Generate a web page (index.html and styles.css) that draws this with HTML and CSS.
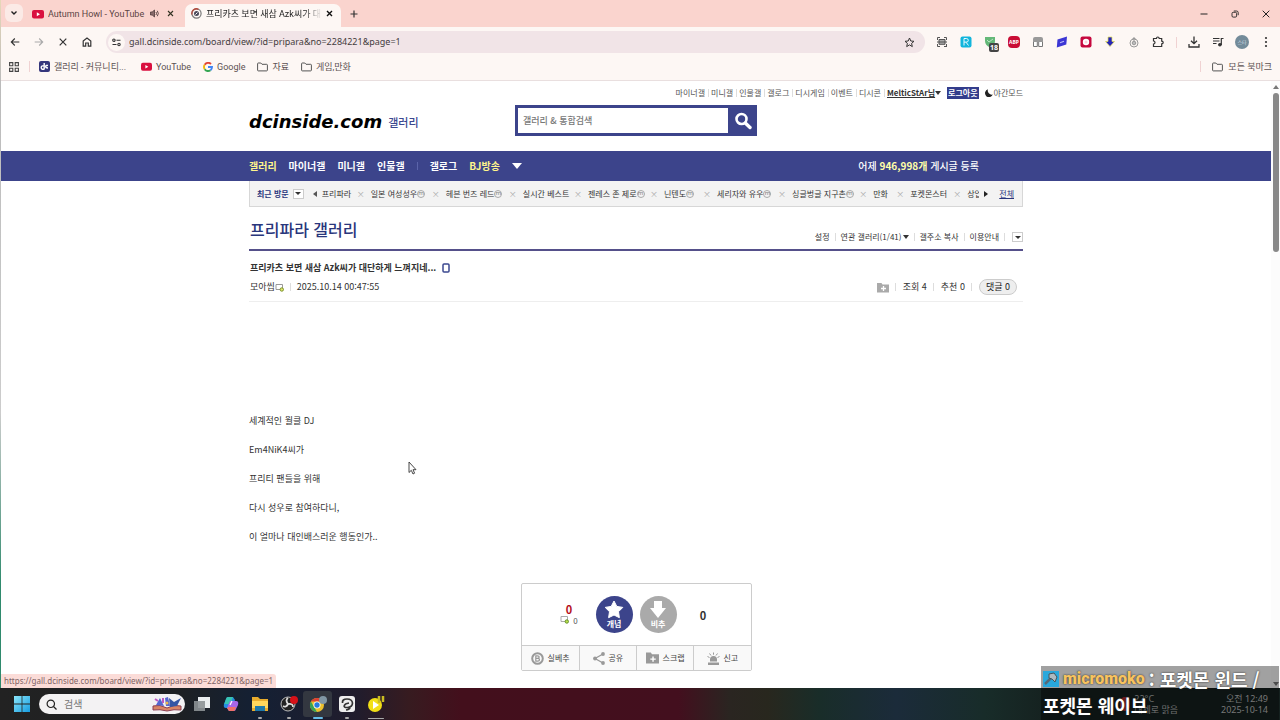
FILE: index.html
```html
<!DOCTYPE html>
<html lang="ko">
<head>
<meta charset="utf-8">
<title>프리파라 갤러리</title>
<link rel="stylesheet" href="styles.css">
</head>
<body>
<div class="browser">
  <header class="chrome">
    <div class="tabstrip">
      <button class="tab-search" aria-label="탭 검색"><svg width="8" height="8" viewBox="0 0 8 8"><path d="M1.500 2.500 4 5l2.500-2.500" fill="none" stroke="#222" stroke-width="1.400"/></svg></button>
      <div class="tab">
        <svg width="12" height="12" viewBox="0 0 12 12"><rect y="2" width="12" height="8.500" rx="2" fill="#d9103f"/><path d="M4.800 4.300v4L8 6.300z" fill="#fff"/></svg>
        <span class="tab-title">Autumn Howl - YouTube</span>
        <svg class="sound" width="9" height="9" viewBox="0 0 9 9"><path d="M.5 3h1.700L4.500 1v7L2.200 6H.5z" fill="#8a6c6c" stroke="#4d3a3a" stroke-width=".8"/><path d="M6 3q1 1.500 0 3M7.300 1.800q2 2.700 0 5.400" fill="none" stroke="#4d3a3a" stroke-width=".9"/></svg>
        <button class="icon-btn" aria-label="닫기"><svg width="7" height="7" viewBox="0 0 7 7"><path d="M1 1l5 5M6 1 1 6" stroke="#332" stroke-width="1.100"/></svg></button>
      </div>
      <div class="tab active">
        <svg width="11" height="11" viewBox="0 0 11 11"><circle cx="5.500" cy="5.500" r="4.600" fill="none" stroke="#777" stroke-width="1.200"/><path d="M1 6.500A4.600 4.600 0 0 1 7.500 1.300" fill="none" stroke="#b5493c" stroke-width="1.300"/><circle cx="5.500" cy="5.500" r="2.500" fill="#4a4a5a"/><path d="M4.500 6.500l2-2" stroke="#fff"/></svg>
        <span class="tab-title fade">프리카츠 보면 새삼 Azk씨가 대단하게</span>
        <button class="icon-btn" aria-label="닫기"><svg width="7" height="7" viewBox="0 0 7 7"><path d="M1 1l5 5M6 1 1 6" stroke="#111" stroke-width="1.400"/></svg></button>
      </div>
      <button class="icon-btn new-tab" aria-label="새 탭"><svg width="8" height="8" viewBox="0 0 8 8"><path d="M4 .5v7M.5 4h7" stroke="#333" stroke-width="1.200"/></svg></button>
      <div class="window-controls">
        <button class="icon-btn" aria-label="최소화"><svg width="8" height="8" viewBox="0 0 8 8"><path d="M.5 4h7" stroke="#222"/></svg></button>
        <button class="icon-btn" aria-label="이전 크기로"><svg width="8" height="8" viewBox="0 0 8 8" fill="none" stroke="#222" stroke-width=".9"><rect x="1" y="2.300" width="4.600" height="4.800" rx="1.200"/><path d="M2.800 1h2.700Q7.200 1 7.200 2.700v2.500"/></svg></button>
        <button class="icon-btn" aria-label="창 닫기"><svg width="8" height="8" viewBox="0 0 8 8"><path d="M.7.7l6.600 6.600M7.300.7.7 7.300" stroke="#222"/></svg></button>
      </div>
    </div>

    <div class="toolbar">
      <button class="tool" aria-label="뒤로"><svg width="10" height="10" viewBox="0 0 10 10" fill="none" stroke="#333" stroke-width="1.100"><path d="M9.300 5H1.500M4.800 1.500 1.300 5l3.500 3.500"/></svg></button>
      <button class="tool" aria-label="앞으로"><svg width="10" height="10" viewBox="0 0 10 10" fill="none" stroke="#aaa" stroke-width="1.100"><path d="M.7 5h7.800M5.200 1.500 8.700 5 5.200 8.500"/></svg></button>
      <button class="tool" aria-label="중지"><svg width="10" height="10" viewBox="0 0 10 10"><path d="M1.700 1.700l6.600 6.600M8.300 1.700 1.700 8.300" stroke="#333" stroke-width="1.200"/></svg></button>
      <button class="tool" aria-label="홈"><svg width="10" height="10" viewBox="0 0 10 10" fill="none" stroke="#333" stroke-width="1.200"><path d="M1.200 4 5 1l3.800 3v5.200H6.300V6H3.700v3.200H1.200z"/></svg></button>
      <div class="omnibox">
        <button class="site-info" aria-label="사이트 정보"><svg width="9" height="9" viewBox="0 0 9 9" fill="none" stroke="#333" stroke-width="1.100"><circle cx="1.900" cy="2.200" r="1.200"/><path d="M4.500 2.200H8.500M.5 6.500h4"/><circle cx="7" cy="6.500" r="1.200"/></svg></button>
        <input class="url" aria-label="주소" value="gall.dcinside.com/board/view/?id=pripara&amp;no=2284221&amp;page=1">
        <button class="icon-btn" aria-label="북마크"><svg width="11" height="11" viewBox="0 0 11 11"><path d="M5.500 1l1.300 3 3.200.3-2.400 2.100.7 3.200-2.800-1.700-2.800 1.700.7-3.200L1 4.300 4.200 4z" fill="none" stroke="#333"/></svg></button>
      </div>
      <div class="extensions">
        <button class="tool" aria-label="캡처"><svg width="12" height="12" viewBox="0 0 12 12" fill="none" stroke="#555"><path d="M1.500 4V1.500H4M8 1.500h2.500V4M1.500 8v2.500H4M8 10.500h3M10.500 8v3"/><path d="M3 3.500h6v4.800H3z" fill="#aaa"/><path d="M1 6h10"/></svg></button>
        <button class="tool" aria-label="R"><svg width="12" height="12" viewBox="0 0 12 12"><rect x=".5" y=".5" width="11" height="11" rx="2" fill="#12b5dc"/><path d="M4 9.500v-7h2.300q2 0 2 1.800t-2 1.800H4M6 6.200l2.500 3.300" fill="none" stroke="#e9faff"/></svg></button>
        <button class="tool badge-tool" aria-label="차단기"><svg width="12" height="12" viewBox="0 0 12 12"><path d="M1 1h10v4q0 4-5 6.500Q1 9 1 5z" fill="#64b878"/><path d="M3 4l2 2 4-3" fill="none" stroke="#b9e3c3"/></svg><span class="badge">18</span></button>
        <button class="tool" aria-label="ABP"><span class="abp">ABP</span></button>
        <button class="tool" aria-label="Tampermonkey"><svg width="12" height="12" viewBox="0 0 12 12"><path d="M1 3q0-2 2-2h6q2 0 2 2v3H1z" fill="#999"/><path d="M1.500 6v4.500h3.800V6M6.700 6v4.500h3.800V6" fill="#fff" stroke="#777"/></svg></button>
        <button class="tool" aria-label="확장 프로그램"><svg width="12" height="12" viewBox="0 0 12 12"><path d="M1.500 3.500 11 .5l-.7 8L.8 11.500z" fill="#3c36d4"/><path d="M4 6.800l4-1.500" stroke="#bbbafa" stroke-width="1.200"/></svg></button>
        <button class="tool" aria-label="녹화"><svg width="12" height="12" viewBox="0 0 12 12"><rect x=".5" y=".5" width="11" height="11" rx="2" fill="#c6083e"/><circle cx="6" cy="6" r="3.200" fill="#fff"/><circle cx="6" cy="6" r="1.500" fill="#f9d5dd"/></svg></button>
        <button class="tool" aria-label="내려받기"><svg width="12" height="12" viewBox="0 0 12 12"><path d="M4 1h4v4.500h2.500L6 10.500 1.500 5.500H4z" fill="#2725b8" stroke="#e5e452" stroke-width=".7"/></svg></button>
        <button class="tool" aria-label="확장"><svg width="12" height="12" viewBox="0 0 12 12" fill="none" stroke="#999"><circle cx="6" cy="7" r="4"/><circle cx="6" cy="7" r="1.800" fill="#bbb"/><path d="M6 1v5M4.500 2.500h3"/></svg></button>
        <button class="tool" aria-label="확장 프로그램 관리"><svg width="12" height="12" viewBox="0 0 12 12"><path d="M1.500 2.500h3q0-1.500 1.300-1.500T7.200 2.500h2.500v2.700q1.500 0 1.500 1.300T9.700 7.800v2.700H1.500V8q1.500 0 1.500-1.500T1.500 5z" fill="none" stroke="#333" stroke-width="1.200"/></svg></button>
        <span class="rule pink"></span>
        <button class="tool" aria-label="다운로드"><svg width="12" height="12" viewBox="0 0 12 12" fill="none" stroke="#333" stroke-width="1.300"><path d="M6 .5v7M3 4.800 6 7.700l3-2.900M1 8v3h10V8"/></svg></button>
        <button class="tool" aria-label="미디어"><svg width="12" height="12" viewBox="0 0 12 12" fill="none" stroke="#333" stroke-width="1.200"><path d="M1 2.500h6.500M1 5h6.500M1 7.500h3.500M9.300 9V2.500h2.200"/><circle cx="7.900" cy="8.800" r="1.200" fill="#333"/></svg></button>
        <button class="tool" aria-label="프로필"><span class="avatar">스타</span></button>
        <button class="tool" aria-label="메뉴"><svg width="12" height="12" viewBox="0 0 12 12" fill="#333"><circle cx="6" cy="2" r="1.100"/><circle cx="6" cy="6" r="1.100"/><circle cx="6" cy="10" r="1.100"/></svg></button>
      </div>
    </div>

    <nav class="bookmarks">
      <button class="icon-btn apps" aria-label="앱"><svg width="10" height="10" viewBox="0 0 10 10" fill="none" stroke="#444" stroke-width="1.100"><path d="M.6.600h3.200v3.200H.6zM6.200.6h3.200v3.200H6.200zM.6 6.200h3.200v3.200H.6zM6.200 6.200h3.200v3.200H6.200z"/></svg></button>
      <span class="rule pink"></span>
      <a class="bookmark" href="#"><svg width="11" height="11" viewBox="0 0 11 11"><rect width="11" height="11" rx="2" fill="#34367c"/><path d="M5.200 2v6.500M5.200 5.200Q2.200 4.200 2.200 6.500t3 1.500M9 4.500q-2.300-.5-2.300 1t2.300 1.500" fill="none" stroke="#fff" stroke-width="1.400"/></svg>갤러리 - 커뮤니티...</a>
      <a class="bookmark" href="#"><svg width="11" height="11" viewBox="0 0 12 12"><rect y="2" width="12" height="8.500" rx="2" fill="#d9103f"/><path d="M4.800 4.300v4L8 6.300z" fill="#fff"/></svg>YouTube</a>
      <a class="bookmark" href="#"><svg width="10" height="10" viewBox="0 0 10 10" fill="none" stroke-width="1.900"><path d="M8 2A4 4 0 0 0 1.700 2.800" stroke="#e24436"/><path d="M1.700 2.800a4 4 0 0 0 0 4.400" stroke="#f2b70c"/><path d="M1.700 7.200A4 4 0 0 0 7.500 8.200" stroke="#35a653"/><path d="M7.500 8.200Q9 7 9 5H5" stroke="#4285f4"/></svg>Google</a>
      <a class="bookmark" href="#"><svg width="11" height="10" viewBox="0 0 11 10"><path d="M.6 1.700Q.6 1 1.300 1h2.500l1.200 1.300h4.600q.8 0 .8.800v5q0 .8-.8.800H1.300Q.6 8.900.6 8.200z" fill="none" stroke="#555"/></svg>자료</a>
      <a class="bookmark" href="#"><svg width="11" height="10" viewBox="0 0 11 10"><path d="M.6 1.700Q.6 1 1.300 1h2.500l1.200 1.300h4.600q.8 0 .8.800v5q0 .8-.8.800H1.300Q.6 8.900.6 8.200z" fill="none" stroke="#555"/></svg>게임,만화</a>
      <span class="rule pink push"></span>
      <a class="bookmark all" href="#"><svg width="11" height="10" viewBox="0 0 11 10"><path d="M.6 1.700Q.6 1 1.300 1h2.500l1.200 1.300h4.600q.8 0 .8.800v5q0 .8-.8.800H1.300Q.6 8.900.6 8.200z" fill="none" stroke="#555"/></svg>모든 북마크</a>
    </nav>
  </header>

  <div class="viewport">
    <div class="page">
      <div class="wrap masthead">
        <ul class="util">
          <li><a href="#">마이너갤</a></li><li><a href="#">미니갤</a></li><li><a href="#">인물갤</a></li><li><a href="#">갤로그</a></li><li><a href="#">디시게임</a></li><li><a href="#">이벤트</a></li><li><a href="#">디시콘</a></li>
          <li class="user"><a href="#">MelticStAr님</a><i class="tri"></i></li>
          <li class="plain"><button class="logout">로그아웃</button></li>
          <li class="plain night"><svg width="8" height="8" viewBox="0 0 8 8"><path d="M3 .3A4 4 0 1 0 7.800 5.500 4 4 0 0 1 3 .3z" fill="#222"/></svg><a href="#">야간모드</a></li>
        </ul>
        <div class="brand-row">
          <a class="brand" href="#"><span class="logo">dcinside.com</span><span class="logo-sub">갤러리</span></a>
          <form class="search">
            <input aria-label="검색" placeholder="갤러리 &amp; 통합검색">
            <button type="button" aria-label="검색"><svg width="18" height="18" viewBox="0 0 18 18" fill="none" stroke="#fff"><circle cx="7.500" cy="7" r="5" stroke-width="2.600"/><path d="M11.300 11l4.700 4.500" stroke-width="3.400" stroke-linecap="round"/></svg></button>
          </form>
        </div>
      </div>

      <nav class="gnb">
        <div class="wrap gnb-row">
          <a class="on" href="#">갤러리</a><a href="#">마이너갤</a><a href="#">미니갤</a><a href="#">인물갤</a><span class="gnb-rule"></span><a href="#">갤로그</a><a class="on" href="#">BJ방송</a>
          <button class="icon-btn more" aria-label="더보기"><i class="tri"></i></button>
          <p class="count">어제 <b>946,998개</b> 게시글 등록</p>
        </div>
      </nav>

      <div class="wrap recent">
        <strong>최근 방문</strong>
        <button class="drop" aria-label="최근 방문 목록"><i class="tri"></i></button>
        <button class="icon-btn" aria-label="이전"><i class="tri left"></i></button>
        <ul class="visits">
          <li><a href="#">프리파라</a><button>×</button></li>
          <li><a href="#">일본 여성성우<i class="m">m</i></a><button>×</button></li>
          <li><a href="#">헤븐 번즈 레드<i class="m">m</i></a><button>×</button></li>
          <li><a href="#">실시간 베스트</a><button>×</button></li>
          <li><a href="#">젠레스 존 제로<i class="m">m</i></a><button>×</button></li>
          <li><a href="#">닌텐도<i class="m">m</i></a><button>×</button></li>
          <li><a href="#">세리자와 유우<i class="m">m</i></a><button>×</button></li>
          <li><a href="#">싱글벙글 지구촌<i class="m">m</i></a><button>×</button></li>
          <li><a href="#">만화</a><button>×</button></li>
          <li><a href="#">포켓몬스터</a><button>×</button></li>
          <li><a href="#">상업</a></li>
        </ul>
        <button class="icon-btn" aria-label="다음"><i class="tri right"></i></button>
        <a class="all-link" href="#">전체</a>
      </div>

      <main class="wrap">
        <div class="gallery-head">
          <h1>프리파라 갤러리</h1>
          <ul class="gallery-links">
            <li><a href="#">설정</a></li><li><a href="#">연관 갤러리(1/41)</a><i class="tri"></i></li><li><a href="#">갤주소 복사</a></li><li><a href="#">이용안내</a></li>
            <li><button class="drop" aria-label="펼치기"><i class="tri"></i></button></li>
          </ul>
        </div>
        <article>
          <header class="post-head">
            <h2>프리카츠 보면 새삼 Azk씨가 대단하게 느껴지네... <svg width="8" height="10" viewBox="0 0 8 10"><rect x="1" y="1" width="6" height="8" rx="1" fill="#fff" stroke="#3b4890" stroke-width="1.500"/></svg></h2>
            <div class="meta">
              <span class="writer">모아씹<svg width="9" height="9" viewBox="0 0 9 9"><path d="M1 1.500h6.500v5H1z" fill="#fff" stroke="#999"/><circle cx="6.800" cy="6.500" r="1.700" fill="#dce56b" stroke="#7d932f"/></svg></span>
              <time>2025.10.14 00:47:55</time>
              <div class="stats">
                <button class="icon-btn" aria-label="스크랩"><svg width="12" height="11" viewBox="0 0 12 11"><path d="M0 1h4.500l1 1.500H12V10.500H0z" fill="#aaa"/><path d="M6.500 4v5M4 6.500h5" stroke="#fff" stroke-width="1.300"/></svg></button>
                <span>조회 4</span><span>추천 0</span><span><button class="pill">댓글 0</button></span>
              </div>
            </div>
          </header>
          <div class="post-body">
            <p>세계적인 월클 DJ</p><p>Em4NiK4씨가</p><p>프리티 팬들을 위해</p><p>다시 성우로 참여하다니,</p><p>이 얼마나 대인배스러운 행동인가..</p>
          </div>
          <section class="vote">
            <div class="vote-top">
              <div class="up-count"><b>0</b><small><svg width="9" height="9" viewBox="0 0 9 9"><path d="M1 1.500h6.500v5H1z" fill="#fff" stroke="#aaa"/><circle cx="6.800" cy="6.500" r="1.700" fill="#bbe04a" stroke="#66922f"/></svg>0</small></div>
              <button class="round up"><svg width="20" height="19" viewBox="0 0 20 19"><path d="M10 1l2.800 5.400 6 1-4.300 4.300.9 6L10 15l-5.400 2.700.9-6L1.200 7.400l6-1z" fill="#fff" stroke="#fff" stroke-linejoin="round"/></svg>개념</button>
              <button class="round down"><svg width="20" height="19" viewBox="0 0 20 19"><path d="M6 1h8v7h4l-8 10-8-10h4z" fill="#fff"/></svg>비추</button>
              <b class="down-count">0</b>
            </div>
            <div class="vote-actions">
              <button><svg width="13" height="13" viewBox="0 0 13 13" fill="none" stroke="#999"><circle cx="6.500" cy="6.500" r="5.300" stroke-width="2"/><path d="M4.800 3.800v5.400h2q1.700 0 1.700-1.400T6.700 6.400H4.800h1.700q1.700 0 1.700-1.300T6.500 3.800z" stroke-width="1.200"/></svg>실베추</button>
              <button><svg width="12" height="13" viewBox="0 0 12 13"><path d="M10 2 2 6.500 10 11" fill="none" stroke="#999" stroke-width="1.300"/><g fill="#999"><circle cx="10" cy="2" r="1.900"/><circle cx="2" cy="6.500" r="1.900"/><circle cx="10" cy="11" r="1.900"/></g></svg>공유</button>
              <button><svg width="13" height="12" viewBox="0 0 12 11"><path d="M0 .5h4.500l1 1.500H12v8.500H0z" fill="#999"/><path d="M6.500 4v5M4 6.500h5" stroke="#fff" stroke-width="1.300"/></svg>스크랩</button>
              <button><svg width="13" height="13" viewBox="0 0 13 13" fill="#999"><path d="M3 9.500V7.500a3.500 3.500 0 0 1 7 0v2zM1 10.500h11V13H1z"/><path d="M6.500.5v2.200M2.500 1.500 4 3.500M10.500 1.500 9 3.500M.5 4.500l2 1M12.500 4.500l-2 1" stroke="#999"/></svg>신고</button>
            </div>
          </section>
        </article>
      </main>
    </div>
    <div class="scrollbar"><i class="tri up-tri"></i><div class="track"><div class="thumb"></div></div><i class="tri"></i></div>
    <div class="status">https://gall.dcinside.com/board/view/?id=pripara&amp;no=2284221&amp;page=1</div>
    <svg class="cursor" width="9" height="14" viewBox="0 0 9 14"><path d="M1 1v10.500l2.300-2.200L5 13l1.600-.8L5 8.700h3z" fill="#fff" stroke="#333" stroke-width=".9"/></svg>
  </div>
</div>

<footer class="taskbar">
  <button class="task" aria-label="시작"><svg width="16" height="16" viewBox="0 0 16 16"><defs><linearGradient id="win" x2="1" y2="1"><stop stop-color="#8be6fb"/><stop offset="1" stop-color="#169ce0"/></linearGradient></defs><path d="M0 0h7.600v7.600H0zM8.400 0H16v7.600H8.400zM0 8.400h7.600V16H0zM8.400 8.400H16V16H8.400z" fill="url(#win)"/></svg></button>
  <label class="task-search"><svg width="11" height="11" viewBox="0 0 11 11" fill="none" stroke="#222" stroke-width="1.200"><circle cx="4.800" cy="4.800" r="3.700"/><path d="M7.500 7.500l3 3"/></svg><input aria-label="검색" placeholder="검색"><svg width="30" height="16" viewBox="0 0 30 16"><path d="M1 10q7-2 14 2 7-4 14-2v4q-7-1-14 1-7-2-14-1z" fill="#d98565" stroke="#8c3f53"/><path d="M4 9l4-7 4 8zM14 10l-1-8 3-1 2 9z" fill="#5467d1"/><path d="M17 2l5 4 7-4-4 8-7 1z" fill="#3556a5"/><path d="M3 3l3 2M11 2v5" stroke="#bd5ac1" stroke-width="2"/><circle cx="15" cy="7" r="1.500" fill="#efb84d"/></svg></label>
  <div class="task-icons">
    <button class="task" aria-label="작업 보기"><svg width="18" height="16" viewBox="0 0 18 16"><rect x="5" y="1" width="12" height="11" fill="#e9edef"/><rect x="1" y="5" width="11" height="10" fill="#8d9296" opacity=".9"/></svg></button>
    <button class="task" aria-label="Copilot"><svg width="16" height="16" viewBox="0 0 16 16"><path d="M5 1h5l2 3-3 8H3Q0 12 1 8l2-5q.5-2 2-2z" fill="#268de0"/><path d="M5 1h5L7 8H1.300L3 3q.5-2 2-2z" fill="#38c3b2"/><path d="M11 15H6l-2-3 3-7h6q3 0 2 4l-2 4q-.5 2-2 2z" fill="#a866e8"/><path d="M4 12l2-1h7l-1 3-1 1H6z" fill="#ef7168"/><path d="M7 9l2-4" stroke="#fff" stroke-width="1.200"/></svg></button>
    <button class="task run" aria-label="파일 탐색기"><svg width="16" height="16" viewBox="0 0 16 16"><path d="M0 1h6l2 2h8v12H0z" fill="#e8ac2d"/><path d="M0 5h16v7H0z" fill="#ffd75d"/><path d="M3 10h10v5H3z" fill="#1e79aa"/></svg></button>
    <button class="task run" aria-label="OBS"><svg width="18" height="16" viewBox="0 0 18 16"><circle cx="8" cy="8" r="7" fill="#222" stroke="#bbb"/><path d="M8 2q-3 2 0 6M3 10q3 2 5-2M13 11q0-4-5-3" fill="none" stroke="#ddd" stroke-width="1.800"/><circle cx="14" cy="4" r="4" fill="#d61118"/></svg></button>
    <button class="task run current" aria-label="Chrome"><svg width="18" height="16" viewBox="0 0 18 16"><circle cx="8" cy="9" r="7" fill="#ecc02d"/><path d="M1.900 5.500A7 7 0 0 1 14 5.500H8z" fill="#dc3e34"/><path d="M1.900 5.500 5 11l3 5A7 7 0 0 1 1.900 5.500z" fill="#38a356"/><circle cx="8" cy="9" r="3.500" fill="#fff"/><circle cx="8" cy="9" r="2.700" fill="#287bdb"/><circle cx="14" cy="4" r="4" fill="#8096a4"/></svg></button>
    <button class="task run" aria-label="Clip Studio"><svg width="16" height="16" viewBox="0 0 16 16"><rect width="16" height="16" rx="3" fill="#eee"/><path d="M3.500 7Q3 3 8 3t5.500 4q0 4-5 4.500-4 .2-3.200-2Q6 7.500 10 7M7 14q3.500-.5 4-2.500" fill="none" stroke="#333" stroke-width="1.700"/></svg></button>
    <button class="task run wide" aria-label="PotPlayer"><svg width="18" height="16" viewBox="0 0 18 16"><circle cx="8" cy="9" r="7" fill="#f2df16"/><path d="M6 5v8l6-4z" fill="#fff"/><path d="M12 0v7M16 0v6" stroke="#cbbd22" stroke-width="2.500"/></svg></button>
  </div>
  <div class="weather"><i></i><span>22°C<br>대체로 맑음</span></div>
  <div class="clock">오전 12:49<br>2025-10-14</div>
</footer>
<aside class="chat">
  <p><svg width="16" height="16" viewBox="0 0 16 16"><rect width="16" height="16" fill="#29a8dc"/><path d="M8 7l-6 6" stroke="#556a78" stroke-width="2.500"/><path d="M6 3l5-1 3 4-2 5-3-3-3-1z" fill="#aebac0" stroke="#45545c"/></svg><b>micromoko</b> : 포켓몬 윈드 /</p>
  <p>포켓몬 웨이브</p>
</aside>
</body>
</html>
```

FILE: styles.css
```css
* { box-sizing: border-box; }
body {
  margin: 0;
  height: 100vh;
  display: flex;
  flex-direction: column;
  overflow: hidden;
  position: relative;
  font: 9px/14px "Noto Sans", "Noto Sans CJK KR", sans-serif;
  color: #333;
  background: #fff;
}
a { color: inherit; text-decoration: none; }
ul, p, h1, h2 { margin: 0; padding: 0; list-style: none; }
button { font: inherit; color: inherit; border: 0; padding: 0; background: none; }
input { font: inherit; color: inherit; border: 0; padding: 0; background: none; outline: 0; min-width: 0; }
svg { flex: none; display: block; }
.icon-btn { display: flex; align-items: center; justify-content: center; }
.tri { display: inline-block; border: 3px solid transparent; border-top: 4px solid currentColor; border-bottom: 0; }
.tri.left { border: 3px solid transparent; border-right: 4px solid #555; border-left: 0; }
.tri.right { border: 3px solid transparent; border-left: 4px solid #222; border-right: 0; }

.browser {
  flex: 1;
  min-height: 0;
  display: flex;
  flex-direction: column;
  padding-left: 1px;
  background: linear-gradient(#e7d8b8 0, #bbb 12%, #ccc 60%, #2f8a6d 85%);
}
.chrome { background: #fdf7f4; border-bottom: 1px solid #e9dfdf; }
.tabstrip { display: flex; align-items: flex-end; height: 27px; padding: 0 10px 0 4px; background: #fad4ce; }
.tab-search { width: 18px; height: 18px; margin-bottom: 5px; border-radius: 6px; background: #fbeae6; display: grid; place-items: center; }
.tab { display: flex; align-items: center; height: 23px; gap: 4px; padding: 0 11px 4px 9px; width: 162px; color: #5c4444; font-family: Roboto, "Noto Sans CJK KR", sans-serif; }
.tab-title { flex: 1; white-space: nowrap; overflow: hidden; }
.sound { margin-right: 4px; }
.tab.active { width: 156px; padding: 0 8px 4px 6px; background: #fdf7f4; border-radius: 7px 7px 0 0; color: #222; }
.fade { mask-image: linear-gradient(90deg, #000 85%, transparent); }
.new-tab { margin: 0 0 9px 9px; }
.window-controls { margin: 0 0 9px auto; display: flex; gap: 23px; }

.toolbar { display: flex; align-items: center; height: 30px; padding: 0 2px; }
.tool { width: 24px; height: 24px; display: grid; place-items: center; }
.omnibox { flex: 1; display: flex; align-items: center; height: 22px; margin: 0 5px 0 7px; padding: 0 10px 0 2px; border-radius: 11px; background: #f1e4e7; }
.site-info { width: 17px; height: 17px; margin-right: 4px; border-radius: 9px; background: #fdf7f4; display: grid; place-items: center; }
.url { flex: 1; font-size: 9px; color: #443c3e; }
.extensions { display: flex; align-items: center; }
.rule.pink { width: 1px; height: 11px; background: #f0d2d2; }
.extensions .rule { margin: 0 5px 0 6px; }
.badge-tool { position: relative; }
.badge { position: absolute; right: 3px; bottom: 2px; padding: 0 1px; border-radius: 2px; background: #444; color: #fff; font: bold 7px/9px "Noto Sans", sans-serif; }
.abp { width: 12px; height: 12px; border-radius: 4px; background: #c90d35; color: #fff; font: bold 5px/12px "Noto Sans", sans-serif; }
.avatar { width: 14px; height: 14px; border-radius: 7px; background: #738b99; color: #d3dee4; font-size: 5px; }
.bookmarks { display: flex; align-items: center; height: 23px; padding: 0 8px 4px; color: #5c5152; font-family: Roboto, "Noto Sans CJK KR", sans-serif; }
.apps { margin-right: 10px; }
.bookmark { display: flex; align-items: center; gap: 4px; margin-left: 12px; white-space: nowrap; }
.apps + .rule + .bookmark { margin-left: 9px; }
.bookmark:nth-of-type(2) { margin-left: 15px; }
.push { margin-left: auto; }
.all { margin-left: 11px; gap: 5px; }

.viewport { flex: 1; min-height: 0; display: flex; position: relative; background: #fff; }
.page { flex: 1; min-width: 0; overflow: hidden; font-family: "Noto Sans CJK KR", sans-serif; }
.wrap { width: 774px; max-width: 100%; margin: 0 auto; }
.masthead { height: 70px; padding-top: 6px; }
.util { display: flex; justify-content: flex-end; align-items: center; font-size: 8px; line-height: 12px; color: #555; }
.util li { display: flex; align-items: center; padding-right: 3px; white-space: nowrap; }
.util li + li:not(.plain)::before, .gallery-links li + li::before, .stats span::before, time::before {
  content: ""; width: 1px; height: 8px; background: #ddd; margin-right: 2px;
}
.util .user { font-weight: bold; color: #333; padding: 0; }
.user a { text-decoration: underline; }
.util .plain { padding: 0; margin-left: 6px; }
.logout { background: #333d8c; color: #fff; font-weight: bold; padding: 0 1px; }
.night { gap: 1px; }
.brand-row { display: grid; grid-template-columns: 266px 242px 1fr; align-items: center; padding-top: 6px; }
.brand { display: flex; align-items: center; gap: 6px; padding-top: 3px; }
.logo { font: italic bold 18px/24px "DejaVu Sans", sans-serif; color: #000; }
.logo-sub { font-size: 11px; line-height: 20px; font-weight: 500; color: #3b4890; }
.search { display: flex; height: 31px; padding: 3px 0 3px 3px; background: #3c448b; }
.search input { flex: 1; background: #fff; padding: 0 5px; font-size: 9px; font-weight: 500; }
.search input::placeholder { color: #777; opacity: 1; }
.search button { width: 29px; display: grid; place-items: center; }

.gnb { background: #3c448b; color: #fff; }
.gnb-row { display: flex; align-items: center; height: 30px; font-size: 10px; font-weight: bold; gap: 12px; }
.gnb-row .on { color: #fff58c; }
.gnb-rule { width: 1px; height: 8px; background: #5b64aa; }
.more .tri { border-width: 6px 5px 0; }
.count { margin: 0 44px 0 auto; font-weight: 500; }
.count b { color: #ffffa8; }

.recent { display: flex; align-items: center; height: 26px; padding: 0 8px 0 7px; background: #f3f3f3; border: 1px solid #d7d7d7; border-top: 0; font-size: 8px; white-space: nowrap; }
.recent strong { color: #29367c; margin-right: 4px; }
.drop { width: 11px; height: 10px; border: 1px solid #ccc; background: #fff; display: grid; place-items: center; }
.drop .tri { border-width: 3px 3px 0; }
.recent .drop { margin-right: 9px; }
.visits { flex: 1; min-width: 0; overflow: hidden; margin: 0 5px 0 5px; display: grid; grid-template-columns: 49fr 75fr 77fr 65fr 76fr 53fr 75fr 81fr 37fr 57fr 12fr; }
.visits li { min-width: 0; display: flex; align-items: center; justify-content: space-between; }
.visits button { color: #aaa; width: 4px; margin-right: 10px; }
.m { display: inline-block; width: 8px; height: 8px; border: 1px solid #aaa; border-radius: 4px; font: 6px/5px "Noto Sans", sans-serif; text-align: center; color: #777; vertical-align: 2px; }
.all-link { margin-left: 11px; color: #29367c; text-decoration: underline; }

.gallery-head { display: flex; justify-content: space-between; align-items: flex-end; height: 44px; border-bottom: 2px solid #55508a; }
h1 { font-size: 16px; line-height: 24px; font-weight: 500; color: #29367c; padding: 0 0 8px 1px; }
.gallery-links { display: flex; font-size: 8px; line-height: 12px; padding-bottom: 6px; }
.gallery-links li { display: flex; align-items: center; padding-left: 5px; }
.gallery-links li + li::before { margin-right: 5px; }
.gallery-links .tri { margin-left: 1px; }
.gallery-links .drop { margin-left: 2px; }
.gallery-links .drop .tri { margin: 0; }
.post-head { padding: 10px 6px 6px 1px; border-bottom: 1px solid #eee; }
h2 { display: flex; align-items: center; gap: 6px; font-size: 9px; line-height: 14px; }
.meta { display: flex; align-items: center; margin-top: 4px; line-height: 16px; }
.writer { display: flex; align-items: center; }
time { display: flex; align-items: center; margin-left: 6px; }
time::before { margin-right: 6px; }
.stats { margin-left: auto; display: flex; gap: 6px; }
.stats span { display: flex; align-items: center; }
.stats span::before { margin-right: 7px; }
.pill { padding: 0 6px; line-height: 14px; border: 1px solid #ccc; border-radius: 8px; background: #eee; color: #222; }
.post-body { padding: 104px 0 32px; line-height: 29px; }
.vote { width: 231px; margin: 0 auto; border: 1px solid #ccc; border-radius: 2px; }
.vote-top { display: flex; align-items: center; justify-content: center; height: 61px; gap: 7px; }
.up-count, .down-count { flex: 1; text-align: center; font-size: 11px; }
.up-count { display: flex; flex-direction: column; line-height: 12px; color: #b5121b; padding-left: 28px; }
.up-count small { display: flex; justify-content: center; gap: 4px; color: #555; font-size: 8px; }
.down-count { padding-right: 28px; }
.round { width: 37px; height: 37px; border-radius: 19px; padding-top: 4px; display: flex; flex-direction: column; align-items: center; color: #fff; font-size: 8px; line-height: 10px; font-weight: bold; }
.up { background: #3c448b; }
.down { background: #aaa; }
.vote-actions { display: grid; grid-template-columns: repeat(4, 1fr); border-top: 1px solid #ccc; background: #f9f9f9; font-size: 8px; color: #444; }
.vote-actions button { display: flex; align-items: center; justify-content: center; height: 24px; gap: 4px; }
.vote-actions button + button { border-left: 1px solid #ccc; }

.scrollbar { width: 9px; padding: 4px 1px 2px; display: flex; flex-direction: column; align-items: center; background: #fcfcfc; color: #777; }
.up-tri { transform: rotate(180deg); }
.track { flex: 1; width: 6px; padding-top: 4px; }
.thumb { height: 27%; border-radius: 3px; background: #888; }
.status { position: absolute; left: 0; bottom: 0; height: 14px; padding: 0 3px; background: #fbdcd8; color: #806364; font-size: 8px; border-radius: 0 3px 0 0; }
.cursor { position: absolute; left: 407px; top: 380px; }

.taskbar {
  display: flex; align-items: center; height: 32px; padding: 0 12px 0 7px;
  background: linear-gradient(90deg, #222 0, #1d2023 14%, #142034 20%, #211c2c 28%, #371b20 32%, #430f1c 36%, #430f1e 53%, #2a2521 57%, #28271e 60%, #192d29 64%, #1b2b3a 70%, #182c29 77%, #15211f 82%);
}
.task { width: 29px; height: 26px; display: flex; flex-direction: column; align-items: center; justify-content: center; position: relative; }
.task-search { display: flex; align-items: center; width: 146px; height: 20px; margin-left: 3px; padding: 0 3px 0 7px; gap: 7px; border-radius: 10px; background: #f3f2f3; color: #444; }
.task-search input { flex: 1; font-size: 10px; }
.task-icons { display: flex; margin-left: 2px; }
.run::after { content: ""; position: absolute; bottom: -2px; width: 4px; height: 2px; border-radius: 1px; background: #aaa; }
.current { background: #333740; border-radius: 3px; }
.current::after { width: 10px; background: #65bce8; }
.wide::after { width: 16px; height: 1px; }
.weather { display: flex; align-items: center; gap: 4px; margin-left: auto; color: #aaa; line-height: 11px; }
.weather i { width: 10px; height: 14px; border-radius: 6px; background: #b72c2d; }
.clock { margin-left: 43px; text-align: right; color: #bbb; line-height: 11px; }
.chat { position: absolute; right: 1px; bottom: 0; width: 238px; height: 54px; padding-left: 2px; background: rgba(0, 0, 0, .37); color: #fff; font: bold 18px/26px "Noto Sans CJK KR", sans-serif; text-shadow: 0 0 2px #222; white-space: nowrap; }
.chat p { display: flex; align-items: center; gap: 4px; }
.chat b { color: #f7c35f; font-family: Roboto, sans-serif; font-size: 16px; }
```
